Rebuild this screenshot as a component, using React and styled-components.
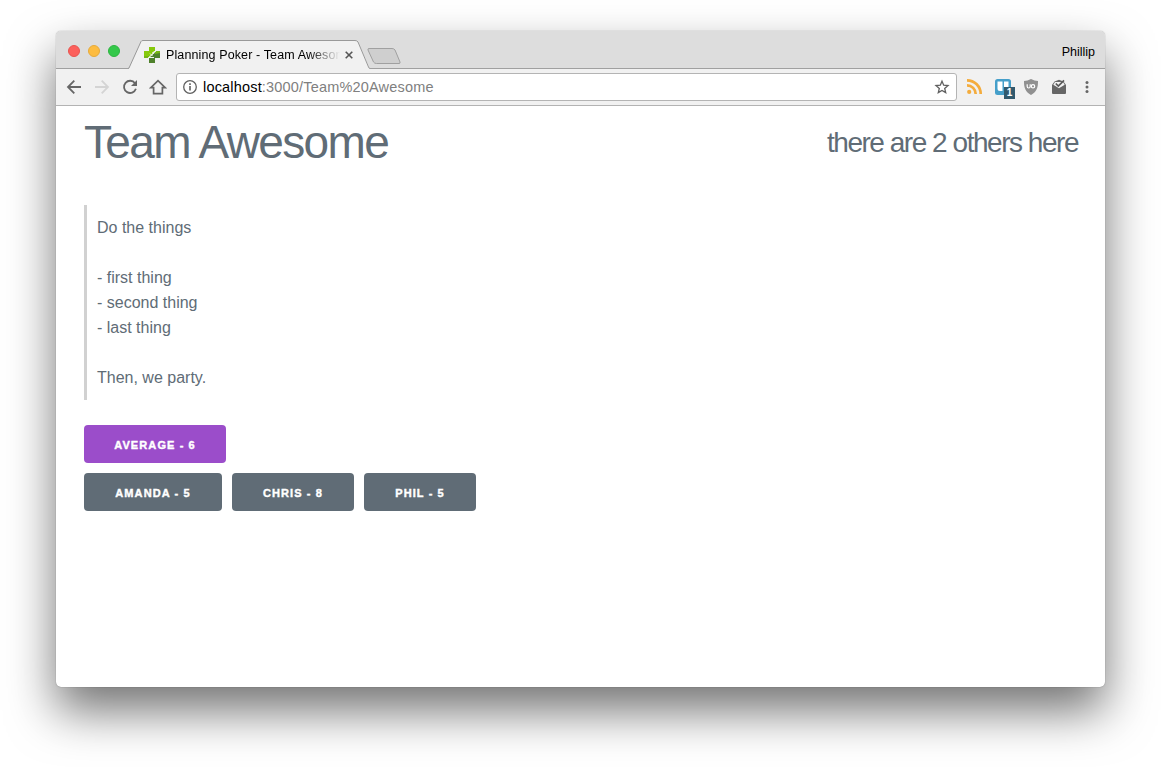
import React from "react";
import styled, { createGlobalStyle } from "styled-components";

const GlobalStyle = createGlobalStyle`
  * { box-sizing: border-box; }
  html, body { margin: 0; background: #fff; }
  body {
    width: 1161px;
    height: 767px;
    overflow: hidden;
    font-family: "Liberation Sans", Arial, sans-serif;
  }
`;

const Desktop = styled.div`
  width: 1161px;
  height: 767px;
  padding: 31px 56px 80px;
  overflow: hidden;
`;

const Window = styled.div`
  width: 1049px;
  height: 656px;
  display: flex;
  flex-direction: column;
  border-radius: 5px;
  background: #fff;
  box-shadow: 0 0 1px rgba(0, 0, 0, 0.5), 0 24px 48px rgba(0, 0, 0, 0.55);
`;

const TabStrip = styled.div`
  position: relative;
  flex: none;
  height: 38px;
  display: flex;
  align-items: flex-start;
  padding: 9px 10px 0 12px;
  background: #dddddd;
  border-bottom: 1px solid #a0a0a0;
  border-radius: 5px 5px 0 0;
`;

const Lights = styled.div`
  display: flex;
  gap: 8px;
  width: 61px;
  padding-top: 5px;
`;

const Light = styled.span`
  width: 12px;
  height: 12px;
  border-radius: 50%;
  background: ${(p) => p.$fill};
  border: 1px solid ${(p) => p.$edge};
`;

const Tab = styled.div`
  position: relative;
  width: 242px;
  height: 29px;
  margin-left: -1px;
  display: flex;
  align-items: center;
  padding-left: 16px;
`;

const TabShape = styled.svg`
  position: absolute;
  left: 0;
  top: 0;
`;

const Favicon = styled.svg`
  position: relative;
  flex: none;
  margin-right: 6px;
`;

const TabTitle = styled.div`
  position: relative;
  width: 174px;
  overflow: hidden;
  white-space: nowrap;
  font-size: 12.5px;
  line-height: 16px;
  letter-spacing: 0.12px;
  color: #000;
  -webkit-mask-image: linear-gradient(to right, #000 142px, transparent 174px);
  mask-image: linear-gradient(to right, #000 142px, transparent 174px);
`;

const TabClose = styled.svg`
  position: relative;
  margin-left: 5px;
`;

const NewTab = styled.svg`
  margin: 8px 0 0 -3px;
`;

const Profile = styled.div`
  margin-left: auto;
  padding-top: 4px;
  font-size: 12.5px;
  line-height: 16px;
  color: #000;
`;

const Toolbar = styled.div`
  flex: none;
  height: 37px;
  display: flex;
  align-items: center;
  padding: 0 8px 0 9px;
  background: #f1f1f1;
  border-bottom: 1px solid #b3b3b3;
`;

const NavButtons = styled.div`
  flex: none;
  display: flex;
  gap: 10px;
  width: 111px;
`;

const AddressBar = styled.div`
  flex: none;
  width: 781px;
  height: 28px;
  display: flex;
  align-items: center;
  padding: 0 6px 0 5px;
  background: #fff;
  border: 1px solid #b4b4b4;
  border-radius: 3px;
`;

const Url = styled.div`
  flex: 1;
  margin-left: 5px;
  font-size: 14.5px;
  line-height: 18px;
  letter-spacing: 0.18px;
  color: #808080;
`;

const Host = styled.span`
  color: #000;
`;

const Extensions = styled.div`
  display: flex;
  align-items: center;
  gap: 8px;
  margin-left: 8px;
`;

const ExtensionSlot = styled.div`
  position: relative;
  flex: none;
  width: 20px;
  height: 20px;
`;

const CountBadge = styled.span`
  position: absolute;
  left: 11px;
  top: 10px;
  width: 11px;
  height: 12px;
  background: #31596d;
  color: #fff;
  font-size: 10px;
  font-weight: 700;
  line-height: 12px;
  text-align: center;
`;

const Page = styled.main`
  flex: 1;
  padding: 0 27px 0 28px;
  color: #606c76;
`;

const PageHeader = styled.header`
  height: 99px;
  display: flex;
  justify-content: space-between;
  padding-top: 9px;
`;

const Title = styled.h1`
  margin: 0;
  font-size: 46px;
  font-weight: 300;
  line-height: 55px;
  letter-spacing: -1.65px;
`;

const Presence = styled.h3`
  margin: 0;
  padding-top: 11px;
  font-size: 28px;
  font-weight: 300;
  line-height: 34px;
  letter-spacing: -1.47px;
`;

const Story = styled.blockquote`
  margin: 0 0 25px;
  padding: 10px;
  border-left: 3px solid #d1d1d1;
  font-size: 16px;
  font-weight: 300;
  line-height: 25px;
  white-space: pre-line;
`;

const VoteRow = styled.div`
  display: flex;
  gap: 10px;
  margin-bottom: 10px;
`;

const Vote = styled.button`
  width: ${(p) => p.$width}px;
  height: 38px;
  padding: 2px 0 0;
  border: 0;
  border-radius: 4px;
  background: ${(p) => (p.$accent ? "#9b4dca" : "#606c76")};
  color: #fff;
  font-family: inherit;
  font-size: 11px;
  font-weight: 700;
  letter-spacing: 1.1px;
  -webkit-text-stroke: 0.4px #fff;
  text-transform: uppercase;
  white-space: nowrap;
`;

const votes = [
  { name: "Amanda", points: 5, width: 138 },
  { name: "Chris", points: 8, width: 122 },
  { name: "Phil", points: 5, width: 112 },
];

const story = `Do the things

- first thing
- second thing
- last thing

Then, we party.`;

const NavIcon = ({ color = "#666", children }) => (
  <svg width="18" height="18" viewBox="0 0 18 18" fill="none" stroke={color} strokeWidth="1.800">
    {children}
  </svg>
);

export default function App() {
  return (
    <Desktop>
      <GlobalStyle />
      <Window>
        <TabStrip>
          <Lights>
            <Light $fill="#fc605c" $edge="#e8544f" />
            <Light $fill="#fdbc40" $edge="#e6aa3a" />
            <Light $fill="#34c84a" $edge="#2db540" />
          </Lights>
          <Tab>
            <TabShape width="242" height="29" viewBox="0 0 242 29">
              <path d="M0 29 L1 28.5 L13 1.5 Q13.5 .5 15 .5 H227 Q229 .5 230 2 L241 27 Q241.500 28.5 242 29Z" fill="#f1f1f1" />
              <path d="M0 28.5 L1 28 L13 1.500 Q13.500 .5 15 .5 H227 Q229 .5 230 2 L240.500 27 Q241 28.5 242 28.500" fill="none" stroke="#999" />
            </TabShape>
            <Favicon width="16" height="16" viewBox="0 0 16 16">
              <path d="M5 0h6v4H5z M0 4h6v6H0z M5 4h5l-4 6z" fill="#86c90b" />
              <path d="M10 5h6v6h-6z M6 10l5-5v5z M5 11h6v5H5z M10 10h1v5h-1z" fill="#4f812c" />
              <path d="M11 4h5v2l-5 1z M0 9h5v2H0z" fill="#75b513" />
              <path d="M3.500 11.500L12 4M6 6.500l2.500 2.500M8.500 5l1.500 2" fill="none" stroke="#f0f7e4" strokeWidth="1" />
            </Favicon>
            <TabTitle>Planning Poker - Team Awesome</TabTitle>
            <TabClose width="8" height="8" viewBox="0 0 8 8">
              <path d="M.7.7l6.600 6.600M7.300.7L.7 7.300" stroke="#555" strokeWidth="1.600" />
            </TabClose>
          </Tab>
          <NewTab width="34" height="17" viewBox="0 0 34 17">
            <path d="M2 .5H25Q27 .5 28 2L33 14Q33.500 15.500 32 15.500H9.500Q7.500 15.500 6.500 14L1 2Q.5.5 2 .5Z" fill="#cfcfcf" stroke="#a0a0a0" />
          </NewTab>
          <Profile>Phillip</Profile>
        </TabStrip>

        <Toolbar>
          <NavButtons>
            <NavIcon><path d="M16 9H3.500M9.300 2.700L3 9L9.300 15.300" /></NavIcon>
            <NavIcon color="#d4d4d4"><path d="M2 9h12.500M8.700 2.700L15 9L8.700 15.300" /></NavIcon>
            <NavIcon>
              <path d="M14 5.200A6.100 6.100 0 1 0 14.900 10.800" />
              <path d="M16 2v6h-6z" fill="#666" stroke="none" />
            </NavIcon>
            <NavIcon><path d="M1.800 9.700H4.600V15.700H13.400V9.700H16.200L9 2.600Z" strokeWidth="1.700" /></NavIcon>
          </NavButtons>
          <AddressBar>
            <svg width="16" height="16" viewBox="0 0 16 16" fill="none" stroke="#606060">
              <circle cx="8" cy="8" r="6.300" strokeWidth="1.300" />
              <path d="M8 7v4.500M8 4.300v1.600" strokeWidth="1.600" />
            </svg>
            <Url><Host>localhost</Host>:3000/Team%20Awesome</Url>
            <svg width="16" height="16" viewBox="0 0 16 16">
              <path d="M8 2.200L9.700 6.200L14 6.600L10.700 9.400L11.700 13.600L8 11.400L4.300 13.600L5.300 9.400L2 6.600L6.300 6.200Z" fill="none" stroke="#606060" strokeWidth="1.300" />
            </svg>
          </AddressBar>
          <Extensions>
            <ExtensionSlot>
              <svg width="20" height="20" viewBox="0 0 20 20" fill="none" stroke="#f4ac3d" strokeWidth="2.700">
                <path d="M2 8.300A8.700 8.700 0 0 1 10.700 17M2 3.300A13.700 13.700 0 0 1 15.700 17" />
                <circle cx="4.200" cy="14.900" r="2.100" fill="#f4ac3d" stroke="none" />
              </svg>
            </ExtensionSlot>
            <ExtensionSlot>
              <svg width="20" height="20" viewBox="0 0 20 20">
                <rect x="2" y="2" width="16" height="16" rx="2.500" fill="#459fca" />
                <path d="M4.500 4.500h5v9.500H7Q4.500 14 4.500 11.500z M11 4.500h4.500V10H11z" fill="#fff" />
              </svg>
              <CountBadge>1</CountBadge>
            </ExtensionSlot>
            <ExtensionSlot>
              <svg width="20" height="20" viewBox="0 0 20 20">
                <path d="M10 2Q13.500 4 17 4C17.200 10.500 15.500 15 10 18C4.500 15 2.800 10.500 3 4Q6.500 4 10 2Z" fill="#909090" />
                <path d="M6.200 7.300v2.200a1.500 1.500 0 0 0 3 0V7.300" fill="none" stroke="#fff" strokeWidth="1.200" />
                <circle cx="12" cy="9.300" r="1.700" fill="none" stroke="#fff" strokeWidth="1.200" />
              </svg>
            </ExtensionSlot>
            <ExtensionSlot>
              <svg width="20" height="20" viewBox="0 0 20 20">
                <path d="M3 8L5.500 4.500L10 2.700L14.500 4.500L17 8V16q0 1-1 1H4q-1 0-1-1z" fill="#666" />
                <path d="M4.300 7.800L6 5h8l1.700 2.800L10 11.300z" fill="#f1f1f1" />
                <path d="M6.800 6.500L9.300 9L15 3.300" fill="none" stroke="#5a5a5a" strokeWidth="1.700" />
              </svg>
            </ExtensionSlot>
            <ExtensionSlot>
              <svg width="20" height="20" viewBox="0 0 20 20" fill="#666">
                <circle cx="10" cy="5.400" r="1.500" />
                <circle cx="10" cy="10" r="1.500" />
                <circle cx="10" cy="14.600" r="1.500" />
              </svg>
            </ExtensionSlot>
          </Extensions>
        </Toolbar>

        <Page>
          <PageHeader>
            <Title>Team Awesome</Title>
            <Presence>there are 2 others here</Presence>
          </PageHeader>
          <Story>{story}</Story>
          <VoteRow>
            <Vote $accent $width={142}>Average - 6</Vote>
          </VoteRow>
          <VoteRow>
            {votes.map((v) => (
              <Vote key={v.name} $width={v.width}>{v.name} - {v.points}</Vote>
            ))}
          </VoteRow>
        </Page>
      </Window>
    </Desktop>
  );
}
